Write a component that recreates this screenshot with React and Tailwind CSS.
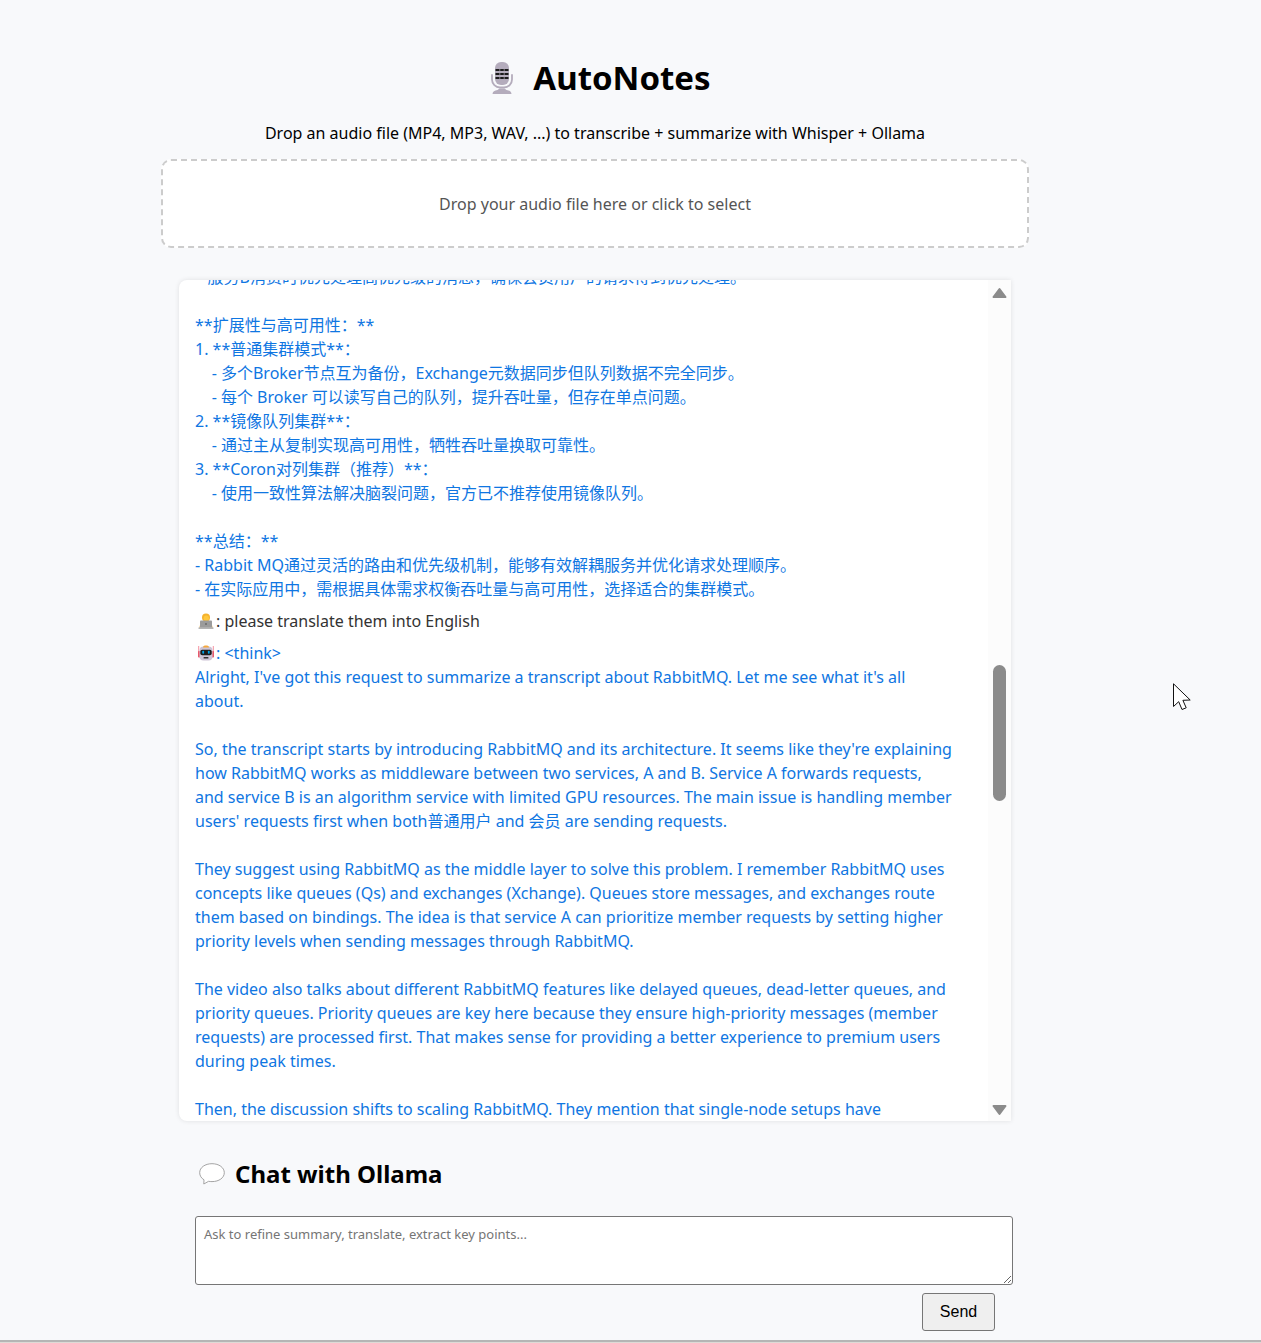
const summaryLines = [
  "   服务B消费时优先处理高优先级的消息，确保会员用户的请求得到优先处理。",
  "",
  "**扩展性与高可用性：**",
  "1. **普通集群模式**：",
  "    - 多个Broker节点互为备份，Exchange元数据同步但队列数据不完全同步。",
  "    - 每个 Broker 可以读写自己的队列，提升吞吐量，但存在单点问题。",
  "2. **镜像队列集群**：",
  "    - 通过主从复制实现高可用性，牺牲吞吐量换取可靠性。",
  "3. **Coron对列集群（推荐）**：",
  "    - 使用一致性算法解决脑裂问题，官方已不推荐使用镜像队列。",
  "",
  "**总结：**",
  "- Rabbit MQ通过灵活的路由和优先级机制，能够有效解耦服务并优化请求处理顺序。",
  "- 在实际应用中，需根据具体需求权衡吞吐量与高可用性，选择适合的集群模式。",
].join("\n");

const replyLines = [
  "Alright, I've got this request to summarize a transcript about RabbitMQ. Let me see what it's all",
  "about.",
  "",
  "So, the transcript starts by introducing RabbitMQ and its architecture. It seems like they're explaining",
  "how RabbitMQ works as middleware between two services, A and B. Service A forwards requests,",
  "and service B is an algorithm service with limited GPU resources. The main issue is handling member",
  "users' requests first when both普通用户 and 会员 are sending requests.",
  "",
  "They suggest using RabbitMQ as the middle layer to solve this problem. I remember RabbitMQ uses",
  "concepts like queues (Qs) and exchanges (Xchange). Queues store messages, and exchanges route",
  "them based on bindings. The idea is that service A can prioritize member requests by setting higher",
  "priority levels when sending messages through RabbitMQ.",
  "",
  "The video also talks about different RabbitMQ features like delayed queues, dead-letter queues, and",
  "priority queues. Priority queues are key here because they ensure high-priority messages (member",
  "requests) are processed first. That makes sense for providing a better experience to premium users",
  "during peak times.",
  "",
  "Then, the discussion shifts to scaling RabbitMQ. They mention that single-node setups have",
].join("\n");

function MicIcon() {
  return (
    <svg viewBox="0 0 22 32" className="h-8 w-[22px]" aria-hidden="true">
      <path d="M1 13v4.500a8 8 0 0 0 8 8h4a8 8 0 0 0 8-8V13" fill="none" stroke="#b4acbc" strokeWidth="1.800" strokeLinecap="round" />
      <rect x="4" y="0" width="14" height="23" rx="6" fill="#b4acbc" />
      <path d="M1.500 32c.3-2.600 2-3.700 5-4l2-1.500h5l2 1.500c3 .3 4.700 1.400 5 4z" fill="#b4acbc" />
      <path d="M4.500 8H17.500M4.500 12H17.500M4.500 16H17.500" stroke="#1c1c1c" strokeWidth="1.800" />
      <path d="M8.800 6v11M13.200 6v11" stroke="#b4acbc" strokeWidth="0.700" />
    </svg>
  );
}

function PersonIcon() {
  return (
    <svg viewBox="0 0 16 16" className="h-4 w-4" aria-hidden="true">
      <path d="M1.500 15c0-4 2-6 6.500-6s6.500 2 6.500 6z" fill="#e9b04a" />
      <circle cx="8" cy="4.500" r="4" fill="#f5b32f" />
      <circle cx="8.300" cy="5.200" r="2.600" fill="#ffc83d" />
      <rect x="2" y="7.500" width="12" height="7.500" rx="0.800" fill="#9b9b9b" />
      <rect x="0.500" y="14.300" width="15" height="1.700" rx="0.500" fill="#b4b4b4" />
      <circle cx="8" cy="11" r="1" fill="#6b6b6b" />
    </svg>
  );
}

function RobotIcon() {
  return (
    <svg viewBox="0 0 16 16" className="h-4 w-4" aria-hidden="true">
      <path d="M0.700 1v8M15.300 1v8" stroke="#f5929f" strokeWidth="1" />
      <rect x="0" y="6" width="2.500" height="6.500" rx="0.800" fill="#e8596a" />
      <rect x="13.500" y="6" width="2.500" height="6.500" rx="0.800" fill="#e8596a" />
      <rect x="1.500" y="1.500" width="13" height="14" rx="4" fill="#cdc4d6" />
      <path d="M5 2.500c0-1.500 1.200-2 3-2s3 .5 3 2z" fill="#f5a83c" />
      <rect x="2.300" y="4.700" width="11.400" height="5.600" rx="1.800" fill="#1c1c1c" />
      <rect x="4.300" y="5.800" width="1.800" height="3" rx="0.800" fill="#00a6ed" />
      <rect x="9.900" y="5.800" width="1.800" height="3" rx="0.800" fill="#00a6ed" />
      <rect x="5.500" y="12" width="5" height="1.600" rx="0.700" fill="#333" />
    </svg>
  );
}

function BubbleIcon() {
  return (
    <svg viewBox="0 0 26 22" className="h-[22px] w-[26px]" aria-hidden="true">
      <path
        d="M13 .7C6 .7.7 4.500.7 9.700c0 3 1.600 5.500 4.300 7.100L4.800 21l4.800-2.700c1 .2 2.200.3 3.400.3 7 0 12.300-3.800 12.300-8.900S20 .7 13 .7z"
        fill="#fff"
        stroke="#9a9a9a"
        strokeWidth="0.900"
        strokeLinejoin="round"
      />
    </svg>
  );
}

function Scrollbar() {
  return (
    <div className="flex w-[23px] shrink-0 flex-col items-center bg-[#fcfcfc] pt-[7px] pb-[5px]" aria-hidden="true">
      <svg viewBox="0 0 15 12" className="h-3 w-[15px]">
        <path d="M7.500 2 13.500 10H1.500z" fill="#8b8b8b" stroke="#8b8b8b" strokeWidth="2" strokeLinejoin="round" />
      </svg>
      <div className="grow-[366]" />
      <div className="h-[136px] w-[13px] rounded-full bg-[#8b8b8b]" />
      <div className="grow-[303]" />
      <svg viewBox="0 0 15 12" className="h-3 w-[15px]">
        <path d="M7.500 10 13.500 2H1.500z" fill="#8b8b8b" stroke="#8b8b8b" strokeWidth="2" strokeLinejoin="round" />
      </svg>
    </div>
  );
}

function Pointer() {
  return (
    <svg viewBox="0 0 20 28" className="absolute top-[683px] left-[1173px] h-7 w-5" aria-hidden="true">
      <path d="M.5.800v22.700l5.200-4.800 3.300 7.800 4.200-1.700-3.300-7.500 7.300-.3z" fill="#fff" stroke="#111" strokeWidth="1" />
    </svg>
  );
}

export default function App() {
  return (
    <div className="relative flex min-h-screen flex-col bg-[#f8f9fb] font-['Noto_Sans','Noto_Sans_CJK_SC',sans-serif] text-base text-black">
      <main className="flex flex-1 flex-col items-center pt-14 pr-[71px]">
        <h1 className="flex items-center gap-5 pl-3 text-[33px] leading-[44px] font-bold">
          <MicIcon />
          AutoNotes
        </h1>
        <p className="mt-[21px] leading-6">
          Drop an audio file (MP4, MP3, WAV, ...) to transcribe + summarize with Whisper + Ollama
        </p>
        <button
          type="button"
          className="mt-3.5 h-[89px] w-full max-w-[868px] rounded-[10px] border-2 border-dashed border-[#ccc] bg-white text-[#555]"
        >
          Drop your audio file here or click to select
        </button>

        <section
          aria-label="Conversation"
          className="mt-8 flex h-[841px] w-full max-w-[832px] overflow-hidden rounded-l-lg bg-white shadow-[0_0_5px_rgba(0,0,0,0.1)]"
        >
          <div className="flex min-w-0 flex-1 flex-col justify-end gap-2 overflow-hidden pl-4 leading-6 whitespace-pre text-[#0f76e2]">
            <p>{summaryLines}</p>
            <div className="flex items-center gap-0.5 pl-[3px] text-[#333]">
              <PersonIcon />
              <span>: please translate them into English</span>
            </div>
            <div>
              <div className="flex items-center gap-0.5 pl-[3px]">
                <RobotIcon />
                <span>{": <think>"}</span>
              </div>
              <p>{replyLines}</p>
            </div>
          </div>
          <Scrollbar />
        </section>

        <section className="w-full max-w-[800px]">
          <h2 className="mt-[37px] flex items-center gap-[10px] pl-1 text-2xl leading-8 font-bold">
            <BubbleIcon />
            Chat with Ollama
          </h2>
          <form className="mt-[26px]" onSubmit={(event) => event.preventDefault()}>
            <textarea
              aria-label="Message"
              placeholder="Ask to refine summary, translate, extract key points..."
              className="-mr-[18px] block h-[69px] w-[calc(100%+18px)] resize rounded-[3px] border border-[#767676] bg-white p-2 text-[13px] leading-[18px] placeholder:text-[#757575]"
            />
            <button
              type="submit"
              className="mt-2 ml-auto block h-[38px] w-[73px] rounded-[3px] border border-[#767676] bg-[#efefef] font-['Liberation_Sans',sans-serif] text-base"
            >
              Send
            </button>
          </form>
        </section>
      </main>
      <div className="h-[3px] border-t-2 border-[#b5b5b5] bg-[#dedad6]" />
      <Pointer />
    </div>
  );
}
